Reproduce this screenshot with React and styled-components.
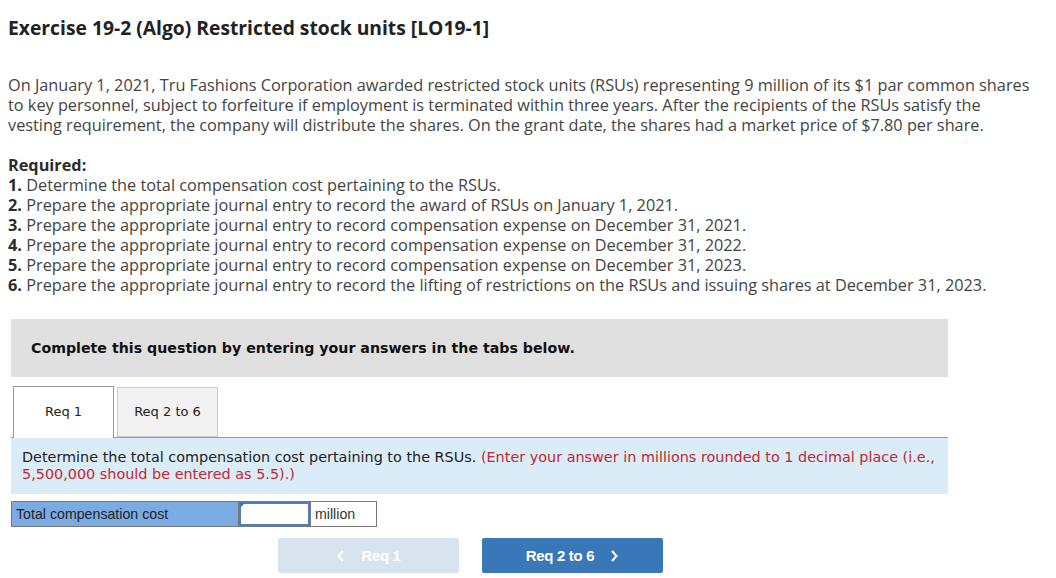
import React from "react";
import styled, { createGlobalStyle } from "styled-components";

const GlobalStyle = createGlobalStyle`
  html, body {
    margin: 0;
    padding: 0;
    background: #fff;
  }
`;

const requirements = [
  "Determine the total compensation cost pertaining to the RSUs.",
  "Prepare the appropriate journal entry to record the award of RSUs on January 1, 2021.",
  "Prepare the appropriate journal entry to record compensation expense on December 31, 2021.",
  "Prepare the appropriate journal entry to record compensation expense on December 31, 2022.",
  "Prepare the appropriate journal entry to record compensation expense on December 31, 2023.",
  "Prepare the appropriate journal entry to record the lifting of restrictions on the RSUs and issuing shares at December 31, 2023.",
];

const App = () => {
  return (
    <Page>
      <GlobalStyle />
      <Title>Exercise 19-2 (Algo) Restricted stock units [LO19-1]</Title>
      <Body>
        On January 1, 2021, Tru Fashions Corporation awarded restricted stock units (RSUs) representing 9 million of its $1 par common shares
        <br />
        to key personnel, subject to forfeiture if employment is terminated within three years. After the recipients of the RSUs satisfy the
        <br />
        vesting requirement, the company will distribute the shares. On the grant date, the shares had a market price of $7.80 per share.
      </Body>
      <Required>
        <strong>Required:</strong>
        {requirements.map((r, i) => (
          <Req key={i}>
            <strong>{i + 1}.</strong> {r}
          </Req>
        ))}
      </Required>

      <Question>
        <Banner>Complete this question by entering your answers in the tabs below.</Banner>
        <Tabs>
          <Tab $active>Req 1</Tab>
          <Tab>Req 2 to 6</Tab>
        </Tabs>
        <Info>
          Determine the total compensation cost pertaining to the RSUs.{" "}
          <Hint>
            (Enter your answer in millions rounded to 1 decimal place (i.e., 5,500,000 should be entered as 5.5).)
          </Hint>
        </Info>
        <AnswerRow>
          <Label>Total compensation cost</Label>
          <InputCell>
            <Input />
          </InputCell>
          <Unit>million</Unit>
        </AnswerRow>
        <Nav>
          <NavButton $disabled>
            <Chevron viewBox="0 0 10 14">
              <path d="M7 2 L2.5 7 L7 12" />
            </Chevron>
            Req 1
          </NavButton>
          <NavButton>
            Req 2 to 6
            <Chevron viewBox="0 0 10 14">
              <path d="M3 2 L7.5 7 L3 12" />
            </Chevron>
          </NavButton>
        </Nav>
      </Question>
    </Page>
  );
};

const Page = styled.div`
  padding: 15px 8px 0 8px;
  font-family: "Open Sans", "Lato", sans-serif;
  color: #333;
`;

const Title = styled.h1`
  margin: 0;
  font-size: 19.3px;
  font-weight: 700;
  color: #222;
  line-height: 26px;
`;

const Body = styled.p`
  margin: 34px 0 0 0;
  font-size: 16.3px;
  line-height: 20px;
  color: #444;
  white-space: nowrap;
`;

const Required = styled.div`
  margin-top: 20px;
  font-size: 16.3px;
  line-height: 20px;
  color: #444;
  white-space: nowrap;
  strong {
    color: #2b2b2b;
  }
`;

const Req = styled.div``;

const Question = styled.div`
  margin-top: 24px;
  margin-left: 3px;
  width: 937px;
  font-family: "DejaVu Sans", Verdana, sans-serif;
`;

const Banner = styled.div`
  background: #e0e0e0;
  height: 58px;
  padding: 0 20px;
  display: flex;
  align-items: center;
  font-size: 14.2px;
  font-weight: 700;
  color: #111;
`;

const Tabs = styled.div`
  display: flex;
  gap: 3px;
  margin-top: 9px;
  padding-left: 2px;
  border-bottom: 1px solid #999;
  height: 51px;
  align-items: flex-end;
`;

const Tab = styled.div`
  width: 101px;
  height: ${(p) => (p.$active ? "52px" : "50px")};
  margin-bottom: ${(p) => (p.$active ? "-1px" : "0")};
  box-sizing: border-box;
  border: 1px solid ${(p) => (p.$active ? "#999" : "#ccc")};
  border-bottom: ${(p) => (p.$active ? "none" : "1px solid #ccc")};
  background: ${(p) => (p.$active ? "#fff" : "#f2f2f2")};
  display: flex;
  align-items: center;
  justify-content: center;
  font-size: 13px;
  color: #222;
  padding-bottom: 2px;
`;

const Info = styled.div`
  background: #dbecf9;
  padding: 11px 11px 11px 11px;
  font-size: 14.4px;
  line-height: 17px;
  color: #222;
`;

const Hint = styled.span`
  color: #c4262e;
`;

const AnswerRow = styled.div`
  display: flex;
  margin-top: 7px;
  height: 26px;
  font-family: "Liberation Sans", Arial, sans-serif;
  font-size: 14.2px;
`;

const Label = styled.div`
  width: 227px;
  box-sizing: border-box;
  background: #7aace3;
  border: 1px solid #7a7a7a;
  border-right: none;
  display: flex;
  align-items: center;
  padding-left: 4px;
  color: #222;
`;

const InputCell = styled.div`
  position: relative;
  width: 72px;
  box-sizing: border-box;
  border: 1px solid #7a7a7a;
  border-right: none;
  &::before {
    content: "";
    position: absolute;
    left: 1px;
    top: 1px;
    border-top: 5px solid #3a74b8;
    border-right: 5px solid transparent;
    z-index: 1;
  }
`;

const Input = styled.div`
  height: 100%;
  box-sizing: border-box;
  border: 2px solid #4a7fc1;
  background: #fff;
`;

const Unit = styled.div`
  width: 67px;
  box-sizing: border-box;
  border: 1px solid #7a7a7a;
  display: flex;
  align-items: center;
  padding-left: 4px;
  color: #333;
`;

const Nav = styled.div`
  display: flex;
  gap: 23px;
  margin-top: 11px;
  padding-left: 267px;
`;

const NavButton = styled.div`
  width: 181px;
  height: 35px;
  border-radius: 2px;
  background: ${(p) => (p.$disabled ? "#d8e3f0" : "#3a77b8")};
  color: #fff;
  display: flex;
  align-items: center;
  justify-content: center;
  gap: 15px;
  font-family: "Liberation Sans", Arial, sans-serif;
  font-weight: 700;
  font-size: 15px;
  letter-spacing: -0.3px;
`;

const Chevron = styled.svg`
  width: 10px;
  height: 14px;
  fill: none;
  stroke: #fff;
  stroke-width: 2;
`;

export default App;
